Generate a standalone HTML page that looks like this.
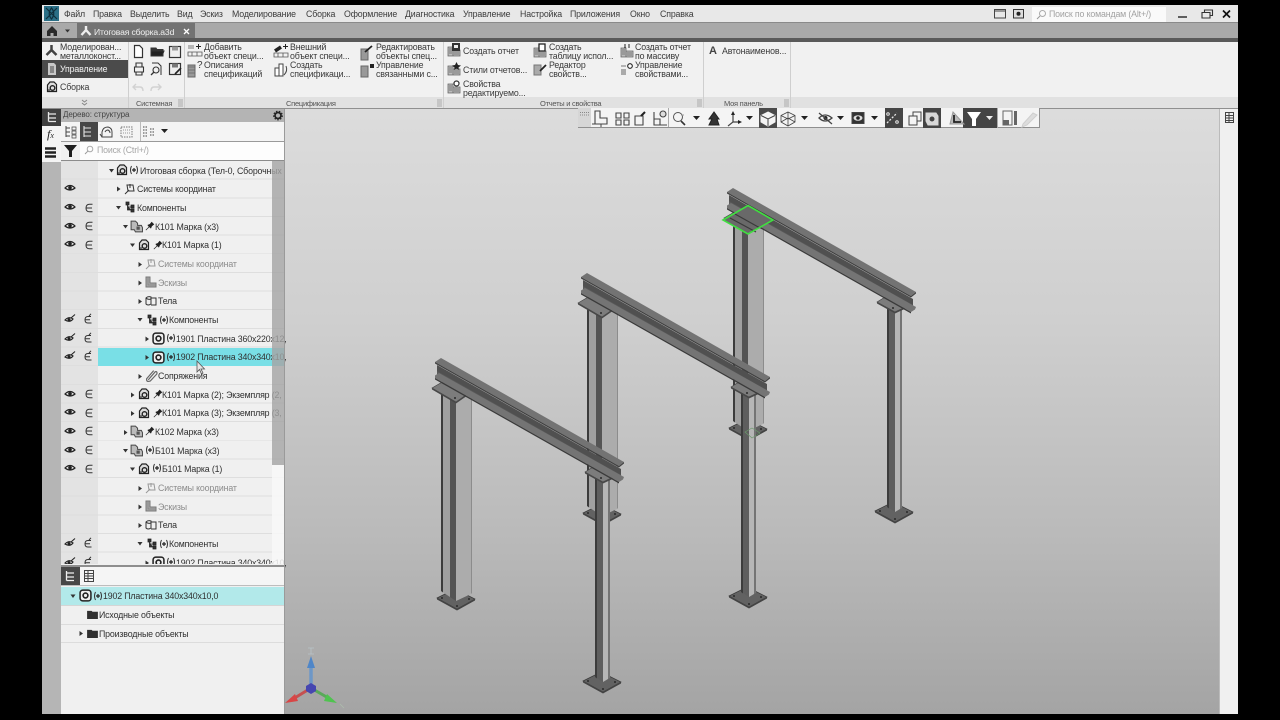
<!DOCTYPE html>
<html lang="ru"><head><meta charset="utf-8"><title>КОМПАС</title>
<style>
html,body{margin:0;padding:0;background:#000;width:1280px;height:720px;overflow:hidden}
#a{position:absolute;left:0;top:0;width:1280px;height:720px;overflow:hidden;filter:blur(.35px);font-family:"Liberation Sans",sans-serif;font-size:9.5px;color:#333}
.b{position:absolute}
.t{position:absolute;white-space:nowrap;line-height:9px;margin-top:1px;font-size:8.8px;letter-spacing:-.15px;color:#3a3a3a}
.c{font-size:7.5px;letter-spacing:-.25px;color:#555}
.m{position:absolute;top:9px;white-space:nowrap;line-height:10px;font-size:8.8px;letter-spacing:-.15px;color:#3c3c3c}
.r{position:absolute;white-space:nowrap;line-height:10px;font-size:8.8px;letter-spacing:-.15px;color:#303030}
.g{color:#8c8c8c}
.s{position:absolute;overflow:visible}
.i{fill:none;stroke:#333;stroke-width:1}
</style></head><body><div id="a">
<svg width="0" height="0" style="position:absolute"><defs>
<symbol id="eye" viewBox="0 0 12 12" overflow="visible"><path d="M1 6Q6 1 11 6Q6 10 1 6Z" fill="none" stroke="#222" stroke-width="1.2"/><circle cx="6" cy="5.8" r="1.8" fill="#222"/></symbol>
<symbol id="eps" viewBox="0 0 12 12" overflow="visible"><path d="M9.5 2.2H6.5Q3 2.2 3 6T6.5 9.8H9.5M3 6H9" fill="none" stroke="#333" stroke-width="1"/></symbol>
<symbol id="eyeb" viewBox="0 0 12 12" overflow="visible"><path d="M1 7Q5 3 9 6Q6 10 1 7Z" fill="none" stroke="#222" stroke-width="1.1"/><circle cx="5" cy="6.6" r="1.5" fill="#222"/><path d="M7 5L11 1.5" stroke="#222" stroke-width="1.1"/></symbol>
<symbol id="epsb" viewBox="0 0 12 12" overflow="visible"><path d="M9 3.5H6Q3 3.5 3 6.8T6 10H9.5M3 6.8H8M7 3L9 .8" fill="none" stroke="#333" stroke-width="1"/></symbol>
<symbol id="asm" viewBox="0 0 12 12" overflow="visible"><path d="M1.5 4L4 1H8L10.500 3.500V10.500H1.500Z" fill="#ddd" stroke="#222" stroke-width="1.200"/><circle cx="6.500" cy="7" r="2.300" fill="none" stroke="#222" stroke-width="1.400"/><path d="M1 9H4" stroke="#222"/></symbol>
<symbol id="asm2" viewBox="0 0 12 12" overflow="visible"><rect x="1" y="1" width="10" height="10" rx="2.500" fill="#eee" stroke="#222" stroke-width="1.400"/><circle cx="6" cy="6" r="2.200" fill="none" stroke="#222" stroke-width="1.500"/></symbol>
<symbol id="multi" viewBox="0 0 12 12" overflow="visible"><path d="M1 1H5L7 3V5H10.500L11.500 7V11H5L4 9H1Z" fill="#bbb" stroke="#444" stroke-width=".9"/><path d="M6 6H9V9H6Z" fill="#555"/></symbol>
<symbol id="pin" viewBox="0 0 12 12" overflow="visible"><path d="M1 11L5 7L3.500 5L6 4L8 1.500L10.500 4L8 6L7 8.500L5.500 7" fill="#222" stroke="#222" stroke-width=".8"/></symbol>
<symbol id="plus" viewBox="0 0 10 10" overflow="visible"><path d="M2.500 1Q.5 5 2.500 9M7.500 1Q9.500 5 7.500 9" fill="none" stroke="#333"/><path d="M3 5H7M5 3V7" stroke="#222" stroke-width="1.200"/></symbol>
<symbol id="cs" viewBox="0 0 12 12" overflow="visible"><path d="M3 2H9L10 8H4ZM1 11L5 7M6 1V5" fill="none" stroke="currentColor" stroke-width="1"/></symbol>
<symbol id="comp" viewBox="0 0 12 12" overflow="visible"><path d="M2 1H5V4H2ZM3.500 4V9H7M3.500 6H7M7 4H10V7H7ZM7 8H10V11H7Z" fill="#333" stroke="#222" stroke-width=".8"/></symbol>
<symbol id="sk" viewBox="0 0 12 12" overflow="visible"><path d="M1 1H5V7H11V11H1Z" fill="#aaa" stroke="#777"/><path d="M3 1V9H11" fill="none" stroke="#888"/></symbol>
<symbol id="body" viewBox="0 0 12 12" overflow="visible"><path d="M1 3Q3 1 6 2V9Q3 11 1 9Z" fill="#eee" stroke="#333"/><path d="M6 3H11V10H6" fill="none" stroke="#333"/><path d="M1 3Q3 5 6 4" fill="none" stroke="#333"/></symbol>
<symbol id="clip" viewBox="0 0 12 12" overflow="visible"><path d="M3 10L9.500 2.500Q11.500 2 11 4.500L5 11Q1 12.500 1.500 9L8 1.500" fill="none" stroke="#666" stroke-width="1.100"/></symbol>
<symbol id="folder" viewBox="0 0 12 10" overflow="visible"><path d="M0 1H5L6 2H12V10H0Z" fill="#303030"/></symbol>
<symbol id="rep" viewBox="0 0 14 14" overflow="visible"><path d="M1 4H6V13H1ZM6 7H13V13H6Z" fill="#bbb" stroke="#666" stroke-width=".8"/><path d="M2 6H5M2 8H5M2 10H5M7 9H12M7 11H12" stroke="#666" stroke-width=".8"/></symbol>
<symbol id="tree" viewBox="0 0 12 12" overflow="visible"><path d="M2.500 1V10.500M2.500 3H10M2.500 7H10M2.500 10.500H10" fill="none" stroke="currentColor" stroke-width="1.300"/></symbol>
<symbol id="grip" viewBox="0 0 5 8"><path d="M0 1H5M0 3H5M0 5H5M0 7H5" stroke="#999" stroke-width=".8"/></symbol>
</defs></svg>

<!-- title bar -->
<div class="b" style="left:42px;top:5px;width:1196px;height:18px;background:#e8e8e8"></div>
<div class="b" style="left:42px;top:22px;width:1196px;height:1px;background:#8a8a8a"></div>
<svg class="s" style="left:44px;top:6px" width="15" height="15" viewBox="0 0 15 15"><rect width="15" height="15" fill="#2b6f86"/><path d="M2 2L13 13M13 2L2 13M7.500 2Q12 7.500 7.500 13Q3 7.500 7.500 2Z" stroke="#0f2f3c" fill="none" stroke-width="1.200"/></svg>
<span class="m" style="left:64px">Файл</span><span class="m" style="left:93px">Правка</span><span class="m" style="left:130px">Выделить</span><span class="m" style="left:177px">Вид</span><span class="m" style="left:200px">Эскиз</span><span class="m" style="left:232px">Моделирование</span><span class="m" style="left:306px">Сборка</span><span class="m" style="left:344px">Оформление</span><span class="m" style="left:405px">Диагностика</span><span class="m" style="left:463px">Управление</span><span class="m" style="left:520px">Настройка</span><span class="m" style="left:570px">Приложения</span><span class="m" style="left:630px">Окно</span><span class="m" style="left:660px">Справка</span>
<svg class="s" style="left:993px;top:8px" width="32" height="12"><rect x="1.500" y="1.500" width="11" height="8.500" fill="none" stroke="#444"/><path d="M1 3H13" stroke="#444"/><rect x="20.500" y="1.500" width="10" height="8.500" fill="#ddd" stroke="#333"/><circle cx="25.500" cy="5.800" r="2" fill="#222"/></svg>
<div class="b" style="left:1032px;top:7px;width:134px;height:15px;background:#fafafa"></div>
<svg class="s" style="left:1036px;top:9px" width="11" height="11"><circle cx="6.500" cy="4.500" r="3" fill="none" stroke="#aaa"/><path d="M4 7L1 10" stroke="#999"/></svg>
<span class="m" style="left:1049px;color:#a2a2a2">Поиск по командам (Alt+/)</span>
<svg class="s" style="left:1176px;top:8px" width="58" height="12"><path d="M2 9H11" stroke="#222" stroke-width="1.400"/><path d="M26 4.500H34V10H26ZM28.500 4V2H36.500V7.500H34" fill="none" stroke="#333" stroke-width="1.100"/><path d="M47 2.500L54 9.500M54 2.500L47 9.500" stroke="#111" stroke-width="1.700"/></svg>

<!-- tab bar -->
<div class="b" style="left:42px;top:23px;width:1196px;height:15px;background:#a9a9a9"></div>
<div class="b" style="left:77px;top:23px;width:118px;height:15px;background:#737373"></div>
<div class="b" style="left:42px;top:38px;width:1196px;height:4px;background:#5a5a5a"></div>
<svg class="s" style="left:46px;top:26px" width="30" height="10"><path d="M1 5L6 0L11 5V10H7.500V7H4.500V10H1Z" fill="#2a2a2a"/><path d="M19 3.500H24L21.500 6.500Z" fill="#333"/></svg>
<svg class="s" style="left:80px;top:25px" width="12" height="12"><path d="M6 1V5M6 5L1.500 10M6 5L10.500 10" stroke="#eee" stroke-width="2.400"/></svg>
<span class="r" style="left:94px;top:27px;color:#f0f0f0;font-size:8.600px">Итоговая сборка.a3d</span>
<svg class="s" style="left:183px;top:28px" width="7" height="7"><path d="M1 1L6 6M6 1L1 6" stroke="#fff" stroke-width="1.300"/></svg>

<!-- ribbon -->
<div class="b" style="left:42px;top:42px;width:1196px;height:55px;background:#f1f1f1"></div>
<div class="b" style="left:42px;top:97px;width:1196px;height:11px;background:#e1e1e1"></div>
<div class="b" style="left:42px;top:108px;width:1196px;height:1px;background:#8f8f8f"></div>
<div class="b" style="left:128px;top:42px;width:1px;height:66px;background:#cfcfcf"></div>
<div class="b" style="left:184px;top:42px;width:1px;height:66px;background:#cfcfcf"></div>
<div class="b" style="left:443px;top:42px;width:1px;height:66px;background:#cfcfcf"></div>
<div class="b" style="left:703px;top:42px;width:1px;height:66px;background:#cfcfcf"></div>
<div class="b" style="left:790px;top:42px;width:1px;height:66px;background:#cfcfcf"></div>
<div class="b" style="left:42px;top:60px;width:86px;height:18px;background:#4b4b4b"></div>
<svg class="s" style="left:45px;top:44px" width="13" height="13"><path d="M6.500 1V6M6.500 6L1.500 11M6.500 6L11.500 11" stroke="#444" stroke-width="2.500"/></svg>
<svg class="s" style="left:47px;top:63px" width="10" height="12"><path d="M1 0H7L9 2V12H1Z" fill="#c8c8c8"/><path d="M3 3H7V10H3Z" fill="#888"/></svg>
<svg class="s" style="left:46px;top:81px" width="12" height="12"><use href="#asm"/></svg>
<span class="t" style="left:60px;top:42px">Моделирован...</span><span class="t" style="left:60px;top:51px">металлоконст...</span>
<span class="t" style="left:60px;top:64px;color:#f2f2f2">Управление</span>
<span class="t" style="left:60px;top:82px">Сборка</span>
<svg class="s" style="left:81px;top:99px" width="7" height="7"><path d="M1 1L3.500 3L6 1M1 4L3.500 6L6 4" fill="none" stroke="#888"/></svg>

<!-- system group -->
<svg class="s" style="left:131px;top:44px" width="52" height="50" fill="none" stroke="#333">
<path d="M3.500 1.500H8.500L11.500 4.500V13.500H3.500Z" fill="#fff" stroke-width="1.200"/>
<path d="M20 4H25L26 5.500H32V12H20Z" fill="#333"/><path d="M20 7H33L31 12H20Z" fill="#222"/>
<rect x="38.500" y="2.500" width="11" height="11" fill="#eee" stroke-width="1.200"/><rect x="41" y="2.500" width="6" height="4" fill="#999" stroke="none"/>
<path d="M5 23V19H11V23M3.500 23H12.500V28H3.500ZM5 28V31H11V28" stroke-width="1.100"/>
<path d="M21 19H27L30 22V31" stroke-width="1"/><circle cx="25" cy="26" r="3" stroke-width="1.100"/><path d="M23 28L20 31" stroke-width="1.300"/>
<rect x="38.500" y="19.500" width="11" height="11" fill="#eee" stroke-width="1.200"/><rect x="41" y="19.500" width="6" height="4" fill="#777" stroke="none"/><path d="M44 30L50 24" stroke="#222" stroke-width="1.600"/>
<path d="M5 40L2 43L5 46M2 43H9Q12 43 12 47" stroke="#d2d2d2" stroke-width="1.400"/><path d="M27 40L30 43L27 46M30 43H23Q20 43 20 47" stroke="#d2d2d2" stroke-width="1.400"/>
</svg>
<span class="t c" style="left:136px;top:98px">Системная</span>
<svg class="s" style="left:178px;top:99px" width="5" height="8"><use href="#grip"/></svg>

<!-- spec group -->
<svg class="s" style="left:188px;top:44px" width="190" height="36" fill="none" stroke="#555">
<path d="M0 2H6M0 4H6M0 8H14V12H0ZM4 8V12M9 8V12" stroke-width=".8"/><path d="M8 2.500H13M10.500 0V5" stroke="#222"/>
<path d="M0 21H7V33H0Z" fill="#999" stroke="#666"/><path d="M0 23H7M0 26H7M0 29H7" stroke="#666" stroke-width=".7"/>
<path d="M87 7L93 3" stroke="#222" stroke-width="3.500"/><path d="M86 9H100V13H86ZM90 9V13M95 9V13" stroke-width=".8"/><path d="M95 2.500H100M97.500 0V5" stroke="#222"/>
<path d="M87 32V24H91V20H95V32Z M91 24V32" fill="#fff" stroke="#444"/><path d="M98 22Q100 27 96 31" stroke="#444"/>
<path d="M173 5H180V16H173Z" fill="#999" stroke="#666"/><path d="M177 8L184 2" stroke="#222" stroke-width="1.800"/>
<path d="M173 22H180V33H173Z" fill="#999" stroke="#666"/><path d="M182 20H186V24H182Z" fill="#222" stroke="none"/>
</svg>
<span class="t" style="left:204px;top:42px">Добавить</span><span class="t" style="left:204px;top:51px">объект специ...</span>
<span class="t" style="left:204px;top:60px">Описания</span><span class="t" style="left:204px;top:69px">спецификаций</span>
<span class="t" style="left:197px;top:60px;font-size:10px">?</span>
<span class="t" style="left:290px;top:42px">Внешний</span><span class="t" style="left:290px;top:51px">объект специ...</span>
<span class="t" style="left:290px;top:60px">Создать</span><span class="t" style="left:290px;top:69px">спецификаци...</span>
<span class="t" style="left:376px;top:42px">Редактировать</span><span class="t" style="left:376px;top:51px">объекты спец...</span>
<span class="t" style="left:376px;top:60px">Управление</span><span class="t" style="left:376px;top:69px">связанными с...</span>
<span class="t c" style="left:286px;top:98px">Спецификация</span>
<svg class="s" style="left:437px;top:99px" width="5" height="8"><use href="#grip"/></svg>

<!-- reports group -->
<svg class="s" style="left:447px;top:43px" width="14" height="14"><use href="#rep"/><rect x="5" y="0" width="8" height="8" fill="#333"/><rect x="7" y="2" width="4" height="3" fill="#eee"/></svg>
<svg class="s" style="left:447px;top:62px" width="14" height="14"><use href="#rep"/><path d="M9.500 0L11 3L14 3.500L11.500 5.500L12 8L9.500 6.500L7 8L7.500 5.500L5 3.500L8 3Z" fill="#222"/></svg>
<svg class="s" style="left:447px;top:80px" width="14" height="14"><use href="#rep"/><circle cx="9.500" cy="3.500" r="2.500" fill="#fff" stroke="#333" stroke-width="1.200"/></svg>
<svg class="s" style="left:533px;top:44px" width="14" height="14"><use href="#rep"/><rect x="6" y="0" width="6" height="7" fill="#fff" stroke="#222" stroke-width="1.300"/></svg>
<svg class="s" style="left:533px;top:62px" width="14" height="14"><path d="M1 3H8V13H1Z" fill="#aaa" stroke="#777"/><path d="M7 9L13 3" stroke="#222" stroke-width="1.800"/></svg>
<svg class="s" style="left:620px;top:44px" width="14" height="14"><use href="#rep"/><path d="M4 1H6M4 3H6M8 1H10M8 3H10" stroke="#222"/></svg>
<svg class="s" style="left:620px;top:62px" width="14" height="14"><path d="M1 7H6V13H1Z" fill="#aaa"/><path d="M1 4H6" stroke="#777"/><circle cx="10" cy="4" r="2.300" fill="#fff" stroke="#222" stroke-width="1.100"/></svg>
<span class="t" style="left:463px;top:46px">Создать отчет</span>
<span class="t" style="left:463px;top:65px">Стили отчетов...</span>
<span class="t" style="left:463px;top:79px">Свойства</span><span class="t" style="left:463px;top:88px">редактируемо...</span>
<span class="t" style="left:549px;top:42px">Создать</span><span class="t" style="left:549px;top:51px">таблицу испол...</span>
<span class="t" style="left:549px;top:60px">Редактор</span><span class="t" style="left:549px;top:69px">свойств...</span>
<span class="t" style="left:635px;top:42px">Создать отчет</span><span class="t" style="left:635px;top:51px">по массиву</span>
<span class="t" style="left:635px;top:60px">Управление</span><span class="t" style="left:635px;top:69px">свойствами...</span>
<span class="t c" style="left:540px;top:98px">Отчеты и свойства</span>
<svg class="s" style="left:697px;top:99px" width="5" height="8"><use href="#grip"/></svg>
<span class="t" style="left:709px;top:46px;font-size:11px;font-weight:bold;color:#444">A</span>
<span class="t" style="left:722px;top:46px">Автонаименов...</span>
<span class="t c" style="left:724px;top:98px">Моя панель</span>
<svg class="s" style="left:784px;top:99px" width="5" height="8"><use href="#grip"/></svg>

<!-- viewport -->
<div class="b" style="left:284px;top:109px;width:935px;height:605px;background:linear-gradient(#dcdcdc 0%,#cfcfcf 35%,#bababa 70%,#a4a4a4 100%)"></div>
<div class="b" style="left:1219px;top:109px;width:19px;height:605px;background:#f0f0f0"></div>
<div class="b" style="left:1219px;top:109px;width:1px;height:605px;background:#bbb"></div>
<svg class="s" style="left:1224px;top:112px" width="11" height="11" fill="none" stroke="#444"><rect x="1.500" y=".5" width="8" height="10"/><path d="M1.500 3.500H9.500M1.500 6H9.500M1.500 8.500H9.500M5 .5V10.500"/></svg>

<svg class="s" style="left:0;top:0" width="1280" height="720" viewBox="0 0 1280 720">
<defs>
<g id="base"><path d="M0 0L18 -9L38 1L20 11Z" fill="#626262" stroke="#3a3a3a" stroke-width=".7"/><path d="M0 0L20 11L38 1V2.500L20 12.500L0 1.500Z" fill="#444"/><circle cx="5" cy="0" r="1" fill="#2a2a2a"/><circle cx="32" cy="1" r="1" fill="#2a2a2a"/><circle cx="20" cy="8" r="1" fill="#2a2a2a"/></g>
<g id="frame">
<!-- left col -->
<use href="#base" x="437" y="598"/>
<path d="M441 392V591L450 597V392Z" fill="#a0a0a0"/>
<path d="M441 392V591L443 592.500V392Z" fill="#3c3c3c"/>
<path d="M450 392V597L456 601V392Z" fill="#545454"/>
<path d="M456 392V601L471 594V392Z" fill="#acacac"/>
<path d="M471 392V594L472 593V392Z" fill="#8c8c8c"/>
<!-- right col -->
<use href="#base" x="583" y="681"/>
<path d="M595 478V677L597 678.500V478Z" fill="#3c3c3c"/>
<path d="M597 478V678L603 682V478Z" fill="#5e5e5e"/>
<path d="M603 478V682L608 679V478Z" fill="#b6b6b6"/>
<path d="M608 478V679L610 678V478Z" fill="#747474"/>
<!-- plates -->
<path d="M432 388L444 381L466 395L456 402Z" fill="#7c7c7c" stroke="#444" stroke-width=".7"/>
<path d="M432 388L456 402L466 395V396.500L456 403.500L432 389.500Z" fill="#484848"/>
<path d="M585 472L598 464L618 475L603 482Z" fill="#7c7c7c" stroke="#444" stroke-width=".7"/>
<path d="M585 472L603 482L618 475V476.500L603 483.500L585 473.500Z" fill="#484848"/>
<circle cx="455" cy="398" r="1" fill="#2a2a2a"/><circle cx="601" cy="478" r="1" fill="#2a2a2a"/>
<!-- beam -->
<path d="M437 365L621 469V480L437 376Z" fill="#505050"/>
<path d="M437 371L621 475V480L437 376Z" fill="#5a5a5a"/>
<path d="M435 375.500L439 373L624 477L623 479.500L619 482L435 378Z" fill="#747474"/>
<path d="M435 378L619 482V483.500L435 379.500Z" fill="#3a3a3a"/>
<path d="M435 362L441 358L624 462L619 466Z" fill="#737373"/>
<path d="M435 362L619 466L624 462V463.500L619 467.500L435 363.500Z" fill="#404040"/>
</g>
</defs>
<use href="#frame" x="292" y="-170"/>
<path d="M723 220L748 205.500L773 220L748 234Z" fill="#696969"/>
<path d="M735 214L760 228M730 218L756 232" stroke="#3a3a3a" stroke-width="1.200"/>
<path d="M723 220L748 205.500L773 220L748 234Z" fill="none" stroke="#3fe03f" stroke-width="1.600"/>
<use href="#frame" x="146" y="-85"/>
<path d="M745 432L752 428L760 433L752 438Z" fill="none" stroke="#6a9a6a" stroke-width=".7"/>
<use href="#frame" x="0" y="0"/>
<!-- triad -->
<path d="M311 688V668" stroke="#6d97c7" stroke-width="3.500"/><path d="M311 656L307 668H315Z" fill="#4f86c8"/>
<path d="M311 688L293 699" stroke="#c55050" stroke-width="3"/><path d="M285 703L295 694L298 701Z" fill="#d84646"/>
<path d="M311 688L330 699" stroke="#5aa95a" stroke-width="3"/><path d="M337 703L327 694L324 701Z" fill="#4fc34f"/>
<path d="M311 648V654M308 648H314M308 654H314" stroke="#b8c4c8" stroke-width=".8"/>
<path d="M340 704L344 708" stroke="#adbdad" stroke-width=".8"/>
<path d="M311 683L316 686V691L311 694L306 691V686Z" fill="#4646b0"/>
</svg>

<!-- view toolbar -->
<div class="b" style="left:578px;top:108px;width:460px;height:19px;background:#f4f4f4;border:1px solid #8f8f8f;border-top:0;box-sizing:content-box"></div>
<div class="b" style="left:578px;top:108px;width:13px;height:19px;background:#d6d6d6"></div>
<svg class="s" style="left:580px;top:112px" width="9" height="4"><path d="M0 .5H9M0 3H9" stroke="#888" stroke-dasharray="1 1"/></svg>
<div class="b" style="left:668px;top:108px;width:1px;height:19px;background:#aaa"></div>
<div class="b" style="left:759px;top:108px;width:18px;height:20px;background:#4a4a4a"></div>
<div class="b" style="left:885px;top:108px;width:18px;height:20px;background:#454545"></div>
<div class="b" style="left:923px;top:108px;width:18px;height:20px;background:#454545"></div>
<div class="b" style="left:963px;top:108px;width:34px;height:20px;background:#454545"></div>
<div class="b" style="left:997px;top:108px;width:1px;height:20px;background:#aaa"></div>
<svg class="s" style="left:575px;top:105px" width="470" height="28" fill="none" stroke="#444">
<path d="M20 6V19H32V13H25V6Z" stroke-width="1.100"/><path d="M17 19H20M26 19V22"/>
<path d="M41 8h5v5h-5zM49 8h5v5h-5zM41 15h5v5h-5zM49 15h5v5h-5z" stroke-width="1.100"/>
<path d="M60 11H68V20H60Z" stroke-width="1.100"/><path d="M66 11L70 7" stroke="#222" stroke-width="2"/>
<path d="M79 7V20H92M79 14H85V20" stroke-width="1.100"/><circle cx="88" cy="9" r="3" stroke-width="1.100" fill="#ddd"/>
<circle cx="103" cy="12" r="4.500" stroke="#555"/><path d="M106 16L110 20" stroke="#333" stroke-width="1.600"/><path d="M106 10h3" stroke="#999"/>
<path d="M118 11H125L121.500 15Z" fill="#222" stroke="none"/>
<path d="M139 7L134 14H137L134 20H144L142 14H144Z" fill="#333" stroke="#222"/>
<path d="M158 8V17L153 21M158 17H165" stroke-width="1.200"/><path d="M158 6L156 10H160ZM167 17L163 15V19Z" fill="#222" stroke="none"/>
<path d="M171 11H178L174.500 15Z" fill="#222" stroke="none"/>
<path d="M193 7L200 10.500V17L193 21L186 17V10.500Z" fill="#f4f4f4" stroke="#f4f4f4"/><path d="M186 10.500L193 14L200 10.500M193 14V21" stroke="#444"/>
<path d="M213 7L220 10.500V17L213 21L206 17V10.500Z M206 10.500L213 14L220 10.500M213 14V21M213 7V13L206 17M220 17L213 13" stroke-width=".8"/>
<path d="M226 11H233L229.500 15Z" fill="#222" stroke="none"/>
<path d="M244 13Q250 7 257 13Q250 19 244 13Z" stroke-width="1.300"/><circle cx="250.500" cy="13" r="2" fill="#222" stroke="none"/><path d="M244 8L257 19" stroke-width="1.300"/>
<path d="M262 11H269L265.500 15Z" fill="#222" stroke="none"/>
<rect x="277" y="7.500" width="12" height="11" fill="#333"/><ellipse cx="283" cy="13" rx="4.500" ry="2.800" fill="#ddd" stroke="none"/><circle cx="283" cy="13" r="1.800" fill="#222" stroke="none"/>
<path d="M296 11H303L299.500 15Z" fill="#222" stroke="none"/>
<path d="M312 18L322 8" stroke="#e8e8e8" stroke-width="1.300" stroke-dasharray="2 1.500"/><circle cx="313" cy="9" r="1.300" stroke="#e8e8e8"/><circle cx="322" cy="17" r="1.300" stroke="#e8e8e8"/>
<path d="M334 11H342V20H334ZM338 11V7H346V16H342" stroke-width="1"/>
<path d="M351 8H361L363 11V20H353L351 16Z" fill="#d8d8d8" stroke="#d8d8d8"/><circle cx="357" cy="14" r="2.500" fill="#444" stroke="none"/>
<path d="M378 7L389 19H375Z" fill="#bbb" stroke="#999"/><path d="M379 10V17H386" stroke="#222" stroke-width="1.800"/>
<path d="M392 7H406L401 14V21H397V14Z" fill="#fff" stroke="none"/>
<path d="M411 11H418L414.500 15Z" fill="#eee" stroke="none"/>
<path d="M428 6H437V20H428Z" stroke="#666"/><path d="M428 15H434V20H428ZM439 6H442V20H439Z" fill="#666" stroke="none"/>
<path d="M448 19L458 8L462 10L452 20L447 22Z" fill="#ddd" stroke="#cfcfcf"/>
</svg>

<!-- left strip -->
<div class="b" style="left:42px;top:109px;width:19px;height:605px;background:#b5b5b5"></div>
<div class="b" style="left:42px;top:109px;width:19px;height:17px;background:#404040"></div>
<div class="b" style="left:42px;top:126px;width:19px;height:36px;background:#f4f4f4"></div>
<svg class="s" style="left:46px;top:111px;color:#e8e8e8" width="12" height="12"><use href="#tree"/></svg>
<span class="b" style="left:47px;top:127px;font:italic 12px 'Liberation Serif',serif;color:#222">f<span style="font-size:8px">x</span></span>
<svg class="s" style="left:45px;top:147px" width="12" height="12"><path d="M0 1.500H11M0 5.500H11M0 9.500H11" stroke="#222" stroke-width="2.400"/></svg>

<!-- tree panel -->
<div class="b" style="left:61px;top:109px;width:223px;height:605px;background:#f0f0f0"></div>
<div class="b" style="left:61px;top:109px;width:223px;height:13px;background:#b4b4b4"></div>
<span class="r" style="left:63px;top:110px;color:#444;font-size:8px;letter-spacing:-.1px">Дерево: структура</span>
<svg class="s" style="left:273px;top:110px" width="10" height="11"><circle cx="5" cy="5.500" r="3" fill="none" stroke="#222" stroke-width="1.700"/><circle cx="5" cy="5.500" r="4.300" fill="none" stroke="#222" stroke-width="1.200" stroke-dasharray="1.500 1.500"/></svg>
<div class="b" style="left:61px;top:122px;width:223px;height:19px;background:#f4f4f4"></div>
<div class="b" style="left:80px;top:122px;width:18px;height:19px;background:#474747"></div>
<svg class="s" style="left:64px;top:125px" width="110" height="14" fill="none" stroke="#444">
<path d="M2 1V12M2 3H6M2 7H6M2 11H6" stroke-width="1"/><path d="M8 2h4v3h-4zM8 6h4v3h-4zM8 10h4v3h-4z" stroke-width=".7"/>
<path d="M20 1V12M20 3H27M20 7H27M20 11H27" stroke="#e6e6e6" stroke-width="1.100"/>
<path d="M38 7Q39 2 44 2Q48 3 48 7V12H38ZM41 7Q42 5 44 5Q46 6 46 8M38 12L36 9" stroke-width="1"/>
<rect x="57" y="2" width="11" height="10" stroke="#777" stroke-dasharray="1.500 1"/><path d="M59 5H66M59 8H66" stroke="#999" stroke-dasharray="1 1"/>
<path d="M79 2H83M79 5H83M79 8H83M79 11H83M86 4H90M86 7H90M86 10H90" stroke-dasharray="1.500 1"/>
<path d="M97 4H104L100.500 8Z" fill="#222" stroke="none"/>
</svg>
<div class="b" style="left:140px;top:122px;width:1px;height:19px;background:#bbb"></div>
<div class="b" style="left:61px;top:141px;width:223px;height:1px;background:#9a9a9a"></div>
<div class="b" style="left:61px;top:142px;width:223px;height:18px;background:#fdfdfd"></div>
<div class="b" style="left:61px;top:142px;width:19px;height:18px;background:#f0f0f0"></div>
<div class="b" style="left:61px;top:160px;width:223px;height:1px;background:#8c8c8c"></div>
<svg class="s" style="left:64px;top:144px" width="13" height="13"><path d="M0 1H13L8 7V13H5V7Z" fill="#1c1c1c"/></svg>
<svg class="s" style="left:84px;top:145px" width="10" height="10"><circle cx="6" cy="4" r="2.800" fill="none" stroke="#aaa"/><path d="M3.800 6.200L1 9" stroke="#999"/></svg>
<span class="r" style="left:97px;top:145px;color:#a6a6a6">Поиск (Ctrl+/)</span>

<!-- rows -->
<div class="b" style="left:61px;top:161px;width:37px;height:405px;background:#e3e3e3"></div>
<div class="b" style="left:98px;top:161px;width:186px;height:405px;background:#f0f0f0"></div>
<div class="b" style="left:61px;top:161px;width:223px;height:405px;background:repeating-linear-gradient(to bottom,transparent 0,transparent 17.650px,#dedede 17.650px,#dedede 18.650px)"></div>
<div class="b" style="left:98px;top:348px;width:186px;height:18px;background:#79dfe6"></div>

<span class="r" style="left:140px;top:166px">Итоговая сборка (Тел-0, Сборочных</span>
<span class="r" style="left:137px;top:184px">Системы координат</span>
<span class="r" style="left:137px;top:203px">Компоненты</span>
<span class="r" style="left:155px;top:222px">К101 Марка (x3)</span>
<span class="r" style="left:162px;top:240px">К101 Марка (1)</span>
<span class="r g" style="left:158px;top:259px">Системы координат</span>
<span class="r g" style="left:158px;top:278px">Эскизы</span>
<span class="r" style="left:158px;top:296px">Тела</span>
<span class="r" style="left:169px;top:315px">Компоненты</span>
<span class="r" style="left:176px;top:334px">1901 Пластина 360х220х12,</span>
<span class="r" style="left:176px;top:352px">1902 Пластина 340х340х10,</span>
<span class="r" style="left:158px;top:371px">Сопряжения</span>
<span class="r" style="left:162px;top:390px">К101 Марка (2); Экземпляр (2,</span>
<span class="r" style="left:162px;top:408px">К101 Марка (3); Экземпляр (3,</span>
<span class="r" style="left:155px;top:427px">К102 Марка (x3)</span>
<span class="r" style="left:155px;top:446px">Б101 Марка (x3)</span>
<span class="r" style="left:162px;top:464px">Б101 Марка (1)</span>
<span class="r g" style="left:158px;top:483px">Системы координат</span>
<span class="r g" style="left:158px;top:502px">Эскизы</span>
<span class="r" style="left:158px;top:520px">Тела</span>
<span class="r" style="left:169px;top:539px">Компоненты</span>
<span class="r" style="left:176px;top:558px">1902 Пластина 340х340х10,</span>

<svg class="s" style="left:0;top:0;color:#777" width="290" height="570">
<!-- eyes -->
<use href="#eye" x="64" y="182" width="12" height="12"/>
<use href="#eye" x="64" y="201" width="12" height="12"/><use href="#eps" x="83" y="202" width="12" height="12"/>
<use href="#eye" x="64" y="220" width="12" height="12"/><use href="#eps" x="83" y="220" width="12" height="12"/>
<use href="#eye" x="64" y="238" width="12" height="12"/><use href="#eps" x="83" y="239" width="12" height="12"/>
<use href="#eyeb" x="64" y="313" width="12" height="12"/><use href="#epsb" x="82" y="313" width="12" height="12"/>
<use href="#eyeb" x="64" y="332" width="12" height="12"/><use href="#epsb" x="82" y="332" width="12" height="12"/>
<use href="#eyeb" x="64" y="350" width="12" height="12"/><use href="#epsb" x="82" y="350" width="12" height="12"/>
<use href="#eye" x="64" y="388" width="12" height="12"/><use href="#eps" x="83" y="388" width="12" height="12"/>
<use href="#eye" x="64" y="406" width="12" height="12"/><use href="#eps" x="83" y="407" width="12" height="12"/>
<use href="#eye" x="64" y="425" width="12" height="12"/><use href="#eps" x="83" y="425" width="12" height="12"/>
<use href="#eye" x="64" y="444" width="12" height="12"/><use href="#eps" x="83" y="444" width="12" height="12"/>
<use href="#eye" x="64" y="462" width="12" height="12"/><use href="#eps" x="83" y="463" width="12" height="12"/>
<use href="#eyeb" x="64" y="537" width="12" height="12"/><use href="#epsb" x="82" y="537" width="12" height="12"/>
<use href="#eyeb" x="64" y="556" width="12" height="12"/><use href="#epsb" x="82" y="556" width="12" height="12"/>
<!-- arrows -->
<g fill="#333">
<path d="M109 169H114L111.500 172.500Z"/>
<path d="M117 186.500V191.500L120.500 189Z"/>
<path d="M116 206H121L118.500 209.500Z"/>
<path d="M123 225H128L125.500 228.500Z"/>
<path d="M130 243.500H135L132.500 247Z"/>
<path d="M138.500 262V267L142 264.500Z"/>
<path d="M138.500 280.500V285.500L142 283Z"/>
<path d="M138.500 299V304L142 301.500Z"/>
<path d="M137.500 318H142.500L140 321.500Z"/>
<path d="M145.500 336.500V341.500L149 339Z"/>
<path d="M145.500 355V360L149 357.500Z"/>
<path d="M138.500 374V379L142 376.500Z"/>
<path d="M131 392.500V397.500L134.500 395Z"/>
<path d="M131 411V416L134.500 413.500Z"/>
<path d="M124 430V435L127.500 432.500Z"/>
<path d="M123 449H128L125.500 452.500Z"/>
<path d="M130 467.500H135L132.500 471Z"/>
<path d="M138.500 486V491L142 488.500Z"/>
<path d="M138.500 504.500V509.500L142 507Z"/>
<path d="M138.500 523V528L142 525.500Z"/>
<path d="M137.500 542H142.500L140 545.500Z"/>
<path d="M145.500 560.500V565.500L149 563Z"/>
</g>
<!-- node icons -->
<use href="#asm" x="116" y="164" width="12" height="12"/><use href="#plus" x="129" y="165" width="10" height="10"/>
<use href="#cs" x="124" y="183" width="12" height="12" color="#333"/>
<use href="#comp" x="124" y="201" width="12" height="12"/>
<use href="#multi" x="130" y="220" width="13" height="13"/><use href="#pin" x="145" y="221" width="10" height="10"/>
<use href="#asm" x="138" y="239" width="12" height="12"/><use href="#pin" x="153" y="240" width="10" height="10"/>
<use href="#cs" x="145" y="258" width="12" height="12" color="#999"/>
<use href="#sk" x="145" y="276" width="12" height="12"/>
<use href="#body" x="145" y="295" width="12" height="12"/>
<use href="#comp" x="146" y="314" width="12" height="12"/><use href="#plus" x="159" y="315" width="10" height="10"/>
<use href="#asm2" x="152" y="332" width="13" height="13"/><use href="#plus" x="166" y="333" width="10" height="10"/>
<use href="#asm2" x="152" y="351" width="13" height="13"/><use href="#plus" x="166" y="352" width="10" height="10"/>
<use href="#clip" x="145" y="369" width="13" height="13"/>
<use href="#asm" x="138" y="388" width="12" height="12"/><use href="#pin" x="153" y="389" width="10" height="10"/>
<use href="#asm" x="138" y="407" width="12" height="12"/><use href="#pin" x="153" y="408" width="10" height="10"/>
<use href="#multi" x="130" y="425" width="13" height="13"/><use href="#pin" x="145" y="426" width="10" height="10"/>
<use href="#multi" x="130" y="444" width="13" height="13"/><use href="#plus" x="145" y="445" width="10" height="10"/>
<use href="#asm" x="138" y="463" width="12" height="12"/><use href="#plus" x="152" y="463" width="10" height="10"/>
<use href="#cs" x="145" y="482" width="12" height="12" color="#999"/>
<use href="#sk" x="145" y="500" width="12" height="12"/>
<use href="#body" x="145" y="519" width="12" height="12"/>
<use href="#comp" x="146" y="538" width="12" height="12"/><use href="#plus" x="159" y="539" width="10" height="10"/>
<use href="#asm2" x="152" y="556" width="13" height="13"/><use href="#plus" x="166" y="557" width="10" height="10"/>
</svg>
<!-- cursor -->
<svg class="s" style="left:196px;top:360px" width="10" height="15"><path d="M1 1V12L3.500 9.500L5.500 14L7 13L5 9H8.500Z" fill="#e6e6e6" stroke="#555" stroke-width=".8"/></svg>
<!-- scrollbar -->
<div class="b" style="left:272px;top:161px;width:12px;height:304px;background:rgba(165,165,165,.82)"></div>
<div class="b" style="left:272px;top:465px;width:12px;height:101px;background:rgba(248,248,248,.85)"></div>

<!-- lower panel -->
<div class="b" style="left:61px;top:564px;width:223px;height:150px;background:#f0f0f0"></div>
<div class="b" style="left:61px;top:565px;width:223px;height:2px;background:#8e8e8e"></div>
<div class="b" style="left:61px;top:567px;width:223px;height:18px;background:#f5f5f5"></div>
<div class="b" style="left:61px;top:567px;width:19px;height:18px;background:#474747"></div>
<div class="b" style="left:61px;top:585px;width:223px;height:1px;background:#bdbdbd"></div>
<svg class="s" style="left:64px;top:570px;color:#eee" width="12" height="12"><use href="#tree"/></svg>
<svg class="s" style="left:84px;top:570px" width="10" height="12" fill="none" stroke="#444"><rect x=".5" y=".5" width="9" height="11"/><path d="M.5 3.500H9.500M.5 6H9.500M.5 8.500H9.500M4 .5V11.500"/></svg>
<div class="b" style="left:61px;top:587px;width:223px;height:18px;background:#b2e9ea"></div>
<div class="b" style="left:61px;top:605px;width:223px;height:1px;background:#d5d5d5"></div>
<div class="b" style="left:61px;top:624px;width:223px;height:1px;background:#dcdcdc"></div>
<div class="b" style="left:61px;top:642px;width:223px;height:1px;background:#dcdcdc"></div>
<svg class="s" style="left:0;top:0" width="290" height="650">
<path d="M70.500 594.500H75.500L73 598Z" fill="#333"/>
<use href="#asm2" x="79" y="589" width="13" height="13"/><use href="#plus" x="93" y="591" width="10" height="10"/>
<use href="#folder" x="87" y="610" width="11" height="9"/>
<path d="M79.500 631V636L83 633.500Z" fill="#333"/>
<use href="#folder" x="87" y="629" width="11" height="9"/>
</svg>
<span class="r" style="left:103px;top:591px">1902 Пластина 340х340х10,0</span>
<span class="r" style="left:99px;top:610px">Исходные объекты</span>
<span class="r" style="left:99px;top:629px">Производные объекты</span>
<div class="b" style="left:284px;top:109px;width:1px;height:605px;background:#9a9a9a"></div>
</div></body></html>
